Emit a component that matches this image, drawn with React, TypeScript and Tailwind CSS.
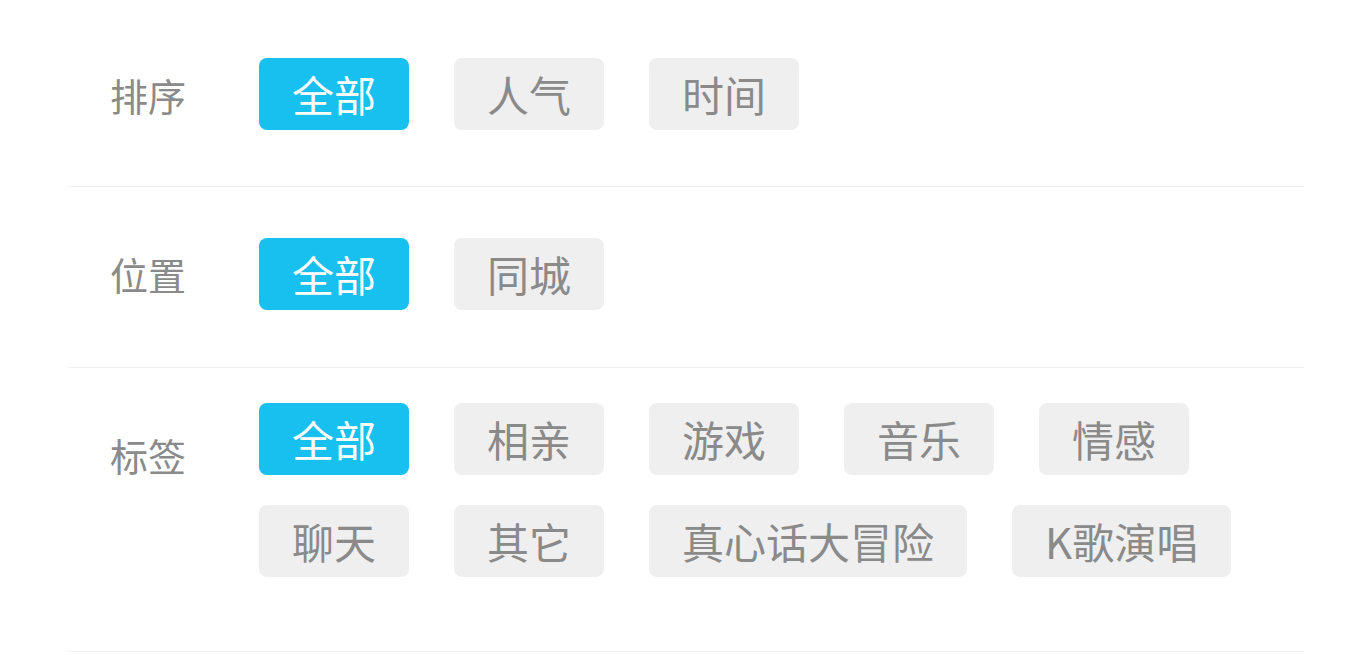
import { useState } from 'react';

type Group = {
  key: string;
  label: string;
  options: string[];
  labelOffset: string;
  padding: string;
};

const groups: Group[] = [
  { key: 'sort', label: '排序', options: ['全部', '人气', '时间'], labelOffset: 'mt-[18px]', padding: 'pt-[58px] pb-[56px]' },
  { key: 'place', label: '位置', options: ['全部', '同城'], labelOffset: 'mt-[17px]', padding: 'pt-[51px] pb-[57px]' },
  {
    key: 'tag',
    label: '标签',
    options: ['全部', '相亲', '游戏', '音乐', '情感', '聊天', '其它', '真心话大冒险', 'K歌演唱'],
    labelOffset: 'mt-[33px]',
    padding: 'pt-[35px] pb-[74px]',
  },
];

export default function App() {
  const [selected, setSelected] = useState<Record<string, string>>({ sort: '全部', place: '全部', tag: '全部' });

  return (
    <div className="min-h-[662px] bg-white font-['Noto_Sans_CJK_SC','Noto_Sans',sans-serif]">
      <div className="ml-[68px] w-[1236px]">
        {groups.map((g) => (
          <div key={g.key} className={`flex items-start pl-[42px] border-b border-[#f0f0f0] ${g.padding}`}>
            <div className={`w-[149px] shrink-0 text-[38px] leading-[38px] text-[#8a8a8a] ${g.labelOffset}`}>{g.label}</div>
            <div className="flex flex-1 flex-wrap gap-x-[45px] gap-y-[30px]">
              {g.options.map((opt) => {
                const active = selected[g.key] === opt;
                return (
                  <button
                    key={opt}
                    onClick={() => setSelected({ ...selected, [g.key]: opt })}
                    className={
                      active
                        ? 'h-[72px] px-[33px] rounded-[8px] bg-[#17c0ee] text-white text-[42px] leading-[72px]'
                        : 'h-[72px] px-[33px] rounded-[8px] bg-[#efefef] text-[#8a8a8a] text-[42px] leading-[72px]'
                    }
                  >
                    {opt}
                  </button>
                );
              })}
            </div>
          </div>
        ))}
      </div>
    </div>
  );
}
